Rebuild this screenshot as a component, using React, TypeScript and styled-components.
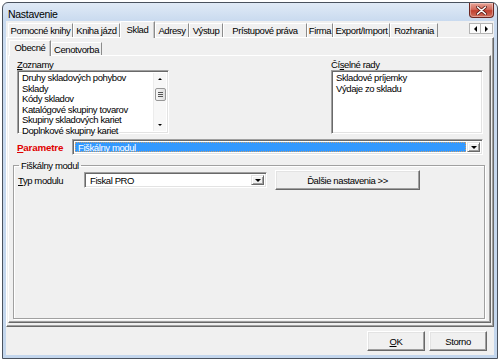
import React from 'react';
import styled, { createGlobalStyle } from 'styled-components';

const GlobalStyle = createGlobalStyle`
  html, body {
    margin: 0;
    padding: 0;
    background: #ffffff;
  }
  body {
    width: 500px;
    height: 360px;
    overflow: hidden;
    font-family: 'Liberation Sans', Arial, sans-serif;
    font-size: 9.5px;
    letter-spacing: -0.4px;
    color: #000;
  }
  * {
    box-sizing: border-box;
  }
`;

const Window = styled.div`
  margin: 2px 0 0 2px;
  width: 496px;
  height: 357px;
  display: flex;
  flex-direction: column;
  padding: 0 3px 3px;
  border: 1px solid #4a525e;
  border-radius: 6px 6px 0 0;
  background: linear-gradient(180deg, #e0eaf6 0, #c9daef 18px, #c3d6ed 100%);
`;

const TitleBar = styled.div`
  flex: none;
  height: 18px;
  display: flex;
  align-items: flex-start;
  justify-content: space-between;
`;

const Title = styled.span`
  margin: 5px 0 0 2px;
  font-size: 10.5px;
  line-height: 12px;
  letter-spacing: -0.3px;
`;

const CloseButton = styled.div`
  width: 25px;
  height: 15px;
  display: flex;
  align-items: center;
  justify-content: center;
  border: 1px solid #6b2620;
  border-top: none;
  border-radius: 0 0 4px 4px;
  background: linear-gradient(180deg, #e8a598 0, #d26a5c 45%, #c0402f 55%, #d0705e 100%);
  box-shadow: inset 0 0 0 1px rgba(255, 255, 255, 0.35);
`;

const Client = styled.div`
  flex: 1;
  display: flex;
  flex-direction: column;
  background: #f0f0f0;
`;

const TabStrip = styled.div<{ $height: number; $pad: number }>`
  flex: none;
  height: ${(p) => p.$height}px;
  padding-left: ${(p) => p.$pad}px;
  display: flex;
  align-items: flex-end;
  position: relative;
  z-index: 1;
`;

const Tab = styled.div<{ $w: number; $active?: boolean; $h: number }>`
  width: ${(p) => p.$w}px;
  height: ${(p) => (p.$active ? p.$h + 3 : p.$h)}px;
  margin-bottom: ${(p) => (p.$active ? -1 : 0)}px;
  display: flex;
  align-items: center;
  justify-content: center;
  padding-bottom: ${(p) => (p.$active ? 2 : 0)}px;
  white-space: nowrap;
  background: #f0f0f0;
  border-top: 1px solid #ffffff;
  border-left: 1px solid #ffffff;
  border-right: 1px solid #8c8c8c;
  box-shadow: ${(p) => (p.$active ? 'inset -1px 0 0 #c8c8c8' : 'none')};
`;

const TabArrows = styled.div`
  margin: 0 1px 3px auto;
  display: flex;
`;

const ArrowButton = styled.div`
  width: 12px;
  height: 11px;
  display: flex;
  align-items: center;
  justify-content: center;
  background: #fbfbfb;
  border: 1px solid #b4b4b4;
  & + & {
    border-left: none;
  }
`;

const Panel = styled.div<{ $height?: number }>`
  ${(p) => (p.$height ? `height: ${p.$height}px; flex: none;` : 'flex: 1;')}
  display: flex;
  flex-direction: column;
  border-top: 1px solid #ffffff;
  border-left: 1px solid #ffffff;
  border-right: 1px solid #696969;
  border-bottom: 1px solid #696969;
  box-shadow: inset -1px -1px 0 #a0a0a0;
`;

const OuterBody = styled.div`
  flex: 1;
  display: flex;
  flex-direction: column;
  padding: 0 2px 3px 1px;
`;

const InnerBody = styled.div`
  flex: 1;
  display: flex;
  flex-direction: column;
  padding: 3px 7px 2px 8px;
`;

const ListsRow = styled.div`
  display: flex;
  justify-content: space-between;
`;

const ListColumn = styled.div`
  width: 152px;
  display: flex;
  flex-direction: column;
`;

const Label = styled.span<{ $w?: number }>`
  line-height: 11px;
  height: 11px;
  white-space: nowrap;
  ${(p) => (p.$w ? `width: ${p.$w}px; flex: none;` : '')}
`;

const ParamLabel = styled(Label)`
  color: #e00000;
  font-weight: bold;
  font-size: 9.8px;
  letter-spacing: -0.2px;
`;

const Sunken = styled.div`
  border-top: 1px solid #a0a0a0;
  border-left: 1px solid #a0a0a0;
  border-right: 1px solid #ffffff;
  border-bottom: 1px solid #ffffff;
  box-shadow: inset 1px 1px 0 #696969, inset -1px -1px 0 #e3e3e3;
  background: #ffffff;
`;

const ListBox = styled(Sunken)`
  height: 64px;
  display: flex;
  padding: 2px;
`;

const Items = styled.div`
  flex: 1;
  padding-left: 2px;
`;

const Item = styled.div`
  height: 10.5px;
  line-height: 10.5px;
  white-space: nowrap;
`;

const ScrollBar = styled.div`
  width: 13px;
  display: flex;
  flex-direction: column;
  align-items: center;
  background: #f7f7f7;
  border-left: 1px solid #ececec;
`;

const ScrollArrow = styled.div`
  height: 12px;
  width: 100%;
  display: flex;
  align-items: center;
  justify-content: center;
`;

const Thumb = styled.div`
  margin-top: 3px;
  width: 11px;
  height: 13px;
  border: 1px solid #979797;
  border-radius: 2px;
  background: linear-gradient(90deg, #f6f6f6, #dedede);
  display: flex;
  flex-direction: column;
  align-items: center;
  justify-content: center;
  gap: 1px;
`;

const Grip = styled.div`
  width: 5px;
  height: 1px;
  background: #555;
`;

const TrackFill = styled.div`
  flex: 1;
`;

const Triangle = styled.div<{ $dir: 'up' | 'down' | 'left' | 'right'; $size?: number }>`
  width: 0;
  height: 0;
  ${({ $dir, $size = 3 }) => {
    const s = $size;
    if ($dir === 'down') return `border-left:${s}px solid transparent;border-right:${s}px solid transparent;border-top:${s}px solid #000;`;
    if ($dir === 'up') return `border-left:${s}px solid transparent;border-right:${s}px solid transparent;border-bottom:${s}px solid #000;`;
    if ($dir === 'left') return `border-top:${s}px solid transparent;border-bottom:${s}px solid transparent;border-right:${s}px solid #000;`;
    return `border-top:${s}px solid transparent;border-bottom:${s}px solid transparent;border-left:${s}px solid #000;`;
  }}
`;

const FormRow = styled.div<{ $top: number }>`
  margin-top: ${(p) => p.$top}px;
  display: flex;
  align-items: center;
`;

const Combo = styled(Sunken)<{ $w?: number }>`
  height: 16px;
  ${(p) => (p.$w ? `width: ${p.$w}px; flex: none;` : 'flex: 1;')}
  display: flex;
  padding: 2px;
`;

const ComboValue = styled.div<{ $selected?: boolean }>`
  flex: 1;
  display: flex;
  align-items: center;
  padding-left: 2px;
  white-space: nowrap;
  color: ${(p) => (p.$selected ? '#ffffff' : '#000')};
  background: ${(p) => (p.$selected ? '#3399ff' : 'transparent')};
  border: 1px ${(p) => (p.$selected ? 'dotted #c8a070' : 'solid transparent')};
  margin-right: 1px;
`;

const DropButton = styled.div`
  width: 13px;
  display: flex;
  align-items: center;
  justify-content: center;
  background: #f0f0f0;
  border-top: 1px solid #e3e3e3;
  border-left: 1px solid #e3e3e3;
  border-right: 1px solid #696969;
  border-bottom: 1px solid #696969;
  box-shadow: inset 1px 1px 0 #ffffff, inset -1px -1px 0 #a0a0a0;
`;

const GroupBox = styled.fieldset`
  flex: 1;
  min-width: 0;
  margin: 5px -2px 1px -4px;
  padding: 0 4px;
  border: 1px solid #a0a0a0;
  box-shadow: inset 1px 1px 0 #ffffff, 1px 1px 0 #ffffff;
`;

const Legend = styled.legend`
  margin-left: 1px;
  padding: 0 2px;
  line-height: 11px;
`;

const PushButton = styled.div<{ $w: number; $gap?: number }>`
  width: ${(p) => p.$w}px;
  height: 20px;
  flex: none;
  margin-left: ${(p) => p.$gap ?? 0}px;
  display: flex;
  align-items: center;
  justify-content: center;
  white-space: nowrap;
  background: #f0f0f0;
  border-top: 1px solid #ffffff;
  border-left: 1px solid #ffffff;
  border-right: 1px solid #696969;
  border-bottom: 1px solid #696969;
  box-shadow: inset -1px -1px 0 #a0a0a0, inset 1px 1px 0 #e3e3e3;
`;

const ButtonBar = styled.div`
  flex: 1;
  display: flex;
  justify-content: flex-end;
  align-items: flex-start;
  gap: 4px;
  padding: 4px 7px 0 0;
`;

const mainTabs = [
  { label: 'Pomocné knihy', w: 65 },
  { label: 'Kniha jázd', w: 47 },
  { label: 'Sklad', w: 35, active: true },
  { label: 'Adresy', w: 34 },
  { label: 'Výstup', w: 34 },
  { label: 'Prístupové práva', w: 84 },
  { label: 'Firma', w: 26 },
  { label: 'Export/Import', w: 57 },
  { label: 'Rozhrania', w: 48 },
];

const lists = [
  'Druhy skladových pohybov',
  'Sklady',
  'Kódy skladov',
  'Katalógové skupiny tovarov',
  'Skupiny skladových kariet',
  'Doplnkové skupiny kariet',
];

const series = ['Skladové príjemky', 'Výdaje zo skladu'];

export default function App() {
  return (
    <>
      <GlobalStyle />
      <Window>
        <TitleBar>
          <Title>Nastavenie</Title>
          <CloseButton>
            <svg width="11" height="9" viewBox="0 0 11 9">
              <path d="M1.5 1 L9.5 8 M9.5 1 L1.5 8" stroke="#5a1a14" strokeWidth="3" strokeLinecap="round" />
              <path d="M1.5 1 L9.5 8 M9.5 1 L1.5 8" stroke="#ffffff" strokeWidth="1.6" strokeLinecap="round" />
            </svg>
          </CloseButton>
        </TitleBar>
        <Client>
          <TabStrip $height={16} $pad={2}>
            {mainTabs.map((t) => (
              <Tab key={t.label} $w={t.w} $h={14} $active={t.active}>
                {t.label}
              </Tab>
            ))}
            <TabArrows>
              <ArrowButton>
                <Triangle $dir="left" />
              </ArrowButton>
              <ArrowButton>
                <Triangle $dir="right" />
              </ArrowButton>
            </TabArrows>
          </TabStrip>
          <Panel $height={290}>
            <OuterBody>
              <TabStrip $height={17} $pad={1}>
                <Tab $w={42} $h={13} $active>
                  Obecné
                </Tab>
                <Tab $w={51} $h={13}>
                  Cenotvorba
                </Tab>
              </TabStrip>
              <Panel>
                <InnerBody>
                  <ListsRow>
                    <ListColumn>
                      <Label>
                        <u>Z</u>oznamy
                      </Label>
                      <ListBox>
                        <Items>
                          {lists.map((l) => (
                            <Item key={l}>{l}</Item>
                          ))}
                        </Items>
                        <ScrollBar>
                          <ScrollArrow>
                            <Triangle $dir="up" $size={2.5} />
                          </ScrollArrow>
                          <Thumb>
                            <Grip />
                            <Grip />
                            <Grip />
                          </Thumb>
                          <TrackFill />
                          <ScrollArrow>
                            <Triangle $dir="down" $size={2.5} />
                          </ScrollArrow>
                        </ScrollBar>
                      </ListBox>
                    </ListColumn>
                    <ListColumn>
                      <Label>
                        Čí<u>s</u>elné rady
                      </Label>
                      <ListBox>
                        <Items>
                          {series.map((s) => (
                            <Item key={s}>{s}</Item>
                          ))}
                        </Items>
                      </ListBox>
                    </ListColumn>
                  </ListsRow>
                  <FormRow $top={5}>
                    <ParamLabel $w={55}>
                      <u>P</u>arametre
                    </ParamLabel>
                    <Combo>
                      <ComboValue $selected>Fiškálny modul</ComboValue>
                      <DropButton>
                        <Triangle $dir="down" $size={3} />
                      </DropButton>
                    </Combo>
                  </FormRow>
                  <GroupBox>
                    <Legend>Fiškálny modul</Legend>
                    <FormRow $top={-1}>
                      <Label $w={66}>
                        <u>T</u>yp modulu
                      </Label>
                      <Combo $w={183}>
                        <ComboValue>Fiskal PRO</ComboValue>
                        <DropButton>
                          <Triangle $dir="down" $size={3} />
                        </DropButton>
                      </Combo>
                      <PushButton $w={145} $gap={8}>
                        Ďalšie nastavenia &gt;&gt;
                      </PushButton>
                    </FormRow>
                  </GroupBox>
                </InnerBody>
              </Panel>
            </OuterBody>
          </Panel>
          <ButtonBar>
            <PushButton $w={58}>
              <u>O</u>K
            </PushButton>
            <PushButton $w={58}>Storno</PushButton>
          </ButtonBar>
        </Client>
      </Window>
    </>
  );
}
